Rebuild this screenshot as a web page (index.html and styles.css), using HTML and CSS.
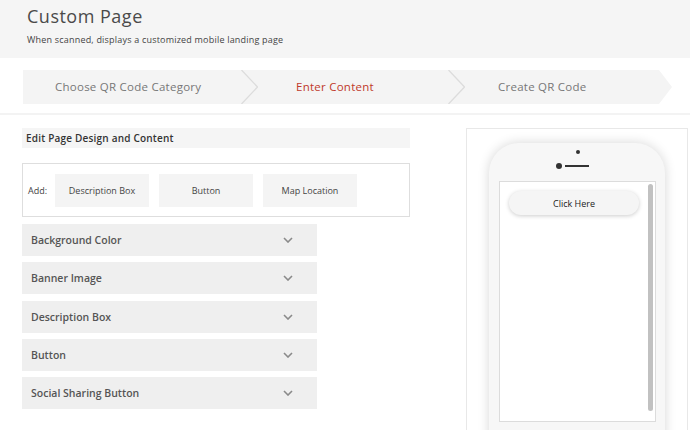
FILE: index.html
```html
<!DOCTYPE html>
<html>
<head>
<meta charset="utf-8">
<link rel="stylesheet" href="styles.css">
</head>
<body>
<header class="head">
  <h1 class="title">Custom Page</h1>
  <p class="sub">When scanned, displays a customized mobile landing page</p>
</header>
<div class="steps-wrap">
  <div class="steps">
    <div class="step s1">Choose QR Code Category</div>
    <svg class="sep" width="17" height="34" viewBox="0 0 17 34"><polyline points="0.5,0 16.5,17 0.5,34" fill="none" stroke="#dcdcdc" stroke-width="1.3"/></svg>
    <div class="step s2 active">Enter Content</div>
    <svg class="sep" width="17" height="34" viewBox="0 0 17 34"><polyline points="0.5,0 16.5,17 0.5,34" fill="none" stroke="#dcdcdc" stroke-width="1.3"/></svg>
    <div class="step s3">Create QR Code</div>
  </div>
</div>
<main class="main">
  <section class="left">
    <div class="edit-bar">Edit Page Design and Content</div>
    <div class="add-box">
      <span class="add-label">Add:</span>
      <div class="add-btn">Description Box</div>
      <div class="add-btn">Button</div>
      <div class="add-btn">Map Location</div>
    </div>
    <div class="acc-list">
      <div class="acc"><span>Background Color</span><svg class="chev" width="10" height="6" viewBox="0 0 10 6"><polyline points="1,1 5,5 9,1" fill="none" stroke="#8a8a8a" stroke-width="1.6"/></svg></div>
      <div class="acc"><span>Banner Image</span><svg class="chev" width="10" height="6" viewBox="0 0 10 6"><polyline points="1,1 5,5 9,1" fill="none" stroke="#8a8a8a" stroke-width="1.6"/></svg></div>
      <div class="acc"><span>Description Box</span><svg class="chev" width="10" height="6" viewBox="0 0 10 6"><polyline points="1,1 5,5 9,1" fill="none" stroke="#8a8a8a" stroke-width="1.6"/></svg></div>
      <div class="acc"><span>Button</span><svg class="chev" width="10" height="6" viewBox="0 0 10 6"><polyline points="1,1 5,5 9,1" fill="none" stroke="#8a8a8a" stroke-width="1.6"/></svg></div>
      <div class="acc"><span>Social Sharing Button</span><svg class="chev" width="10" height="6" viewBox="0 0 10 6"><polyline points="1,1 5,5 9,1" fill="none" stroke="#8a8a8a" stroke-width="1.6"/></svg></div>
    </div>
  </section>
  <aside class="preview">
    <div class="phone">
      <div class="phone-top">
        <span class="speaker-dot"></span>
        <div class="cam-row"><span class="cam"></span><span class="slot"></span></div>
      </div>
      <div class="screen">
        <div class="screen-content">
          <div class="click-btn">Click Here</div>
        </div>
        <div class="scrollbar"></div>
      </div>
    </div>
  </aside>
</main>
</body>
</html>
```
FILE: styles.css
```css
* { box-sizing: border-box; }
html, body { margin: 0; padding: 0; }
body {
  width: 690px;
  height: 430px;
  overflow: hidden;
  background: #fff;
  font-family: "Open Sans", "Liberation Sans", sans-serif;
  color: #444;
}
.head {
  background: #f5f5f5;
  height: 58px;
  padding: 4px 27px 0;
}
.title {
  margin: 0;
  font-size: 18px;
  font-weight: 500;
  color: #4a4a4a;
  line-height: 24px;
  letter-spacing: 0.5px;
}
.sub {
  margin: 6px 0 0;
  font-size: 9px;
  color: #444;
  line-height: 12px;
  letter-spacing: 0.2px;
}
.steps-wrap {
  padding: 12px 20px 9px 23px;
  border-bottom: 2px solid #f3f3f3;
}
.steps {
  display: flex;
  width: 649px;
  height: 34px;
  background: #f4f4f4;
  clip-path: polygon(0 0, calc(100% - 13px) 0, 100% 50%, calc(100% - 13px) 100%, 0 100%);
}
.step {
  font-size: 11.5px;
  line-height: 34px;
  color: #777;
  white-space: nowrap;
  letter-spacing: 0.25px;
}
.s1 { width: 218px; padding-left: 32px; }
.s2 { width: 190px; padding-left: 38px; }
.s3 { flex: 1; padding-left: 33px; }
.step.active { color: #c0392b; }
.sep { flex: none; display: block; }

.main {
  display: flex;
  padding: 13px 0 0 22px;
  align-items: flex-start;
}
.left { width: 388px; flex: none; }
.edit-bar {
  background: #f5f5f5;
  height: 20px;
  line-height: 20px;
  padding-left: 4px;
  font-size: 10px;
  font-weight: 600;
  color: #333;
  letter-spacing: 0.2px;
}
.add-box {
  margin-top: 15px;
  height: 54px;
  border: 1px solid #dedede;
  display: flex;
  align-items: center;
  padding-left: 5px;
  gap: 10px;
}
.add-label {
  font-size: 9px;
  color: #444;
  width: 17px;
}
.add-btn {
  width: 94px;
  height: 33px;
  background: #f4f4f4;
  font-size: 9px;
  color: #444;
  display: flex;
  align-items: center;
  justify-content: center;
}
.acc-list {
  margin-top: 7px;
  display: flex;
  flex-direction: column;
  gap: 6.3px;
  width: 295px;
}
.acc {
  height: 32px;
  background: #efefef;
  display: flex;
  align-items: center;
  justify-content: space-between;
  padding: 0 24px 0 9px;
  font-size: 10.5px;
  font-weight: 600;
  color: #555;
}
.chev { display: block; }

.preview {
  margin-left: 56px;
  width: 222px;
  height: 302px;
  overflow: hidden;
  flex: none;
  border: 1px solid #e8e8e8;
  border-bottom: none;
  padding: 14px 0 0 22px;
}
.phone {
  width: 176px;
  height: 300px;
  background: #f7f7f7;
  border-radius: 30px 30px 0 0;
  box-shadow: 0 0 12px rgba(0,0,0,0.16);
  padding: 0 9px 0 10px;
}
.phone-top {
  height: 38px;
  display: flex;
  flex-direction: column;
  align-items: center;
  padding-top: 7px;
}
.speaker-dot {
  width: 4px;
  height: 4px;
  border-radius: 50%;
  background: #333;
}
.cam-row {
  margin-top: 9px;
  margin-right: 11px;
  display: flex;
  align-items: center;
  gap: 3px;
}
.cam {
  width: 6px;
  height: 6px;
  border-radius: 50%;
  background: #333;
}
.slot {
  width: 24px;
  height: 2px;
  background: #333;
}
.screen {
  height: 241px;
  background: #fff;
  border: 1px solid #dcdcdc;
  display: flex;
  padding: 1px 2px 10px 0;
}
.screen-content {
  flex: 1;
  padding: 8px 0 0 9px;
}
.click-btn {
  width: 130px;
  height: 24px;
  border-radius: 12px;
  background: #f5f5f5;
  box-shadow: 0 1px 4px rgba(0,0,0,0.2);
  font-size: 9px;
  color: #222;
  display: flex;
  align-items: center;
  justify-content: center;
}
.scrollbar {
  width: 5px;
  background: #c1c1c1;
  border-radius: 3px;
  margin-top: 1px;
}
```
